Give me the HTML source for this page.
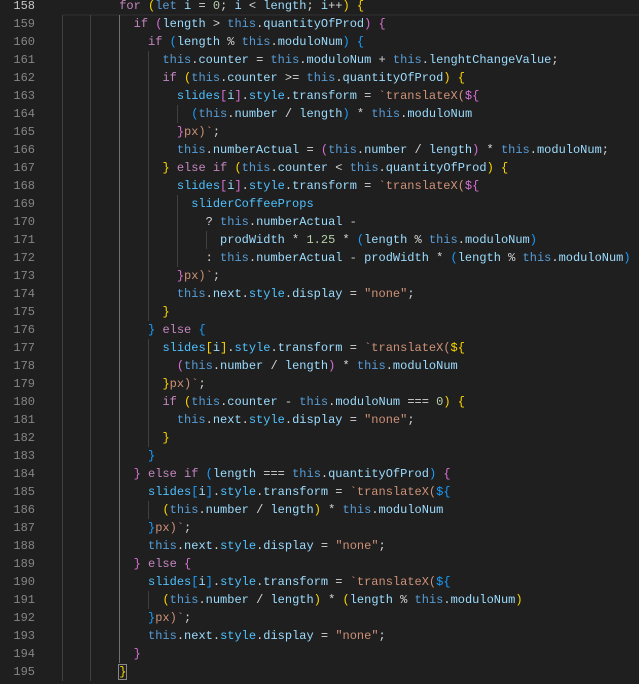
<!DOCTYPE html>
<html><head><meta charset="utf-8"><style>
html,body{margin:0;padding:0;background:#1f1f1f;width:639px;height:684px;overflow:hidden;position:relative;font-family:"Liberation Mono",monospace;font-size:12px;}
.l{position:absolute;left:4px;height:18px;line-height:18px;white-space:pre;color:#d4d4d4;}
.ln{position:absolute;left:0;width:35px;text-align:right;height:18px;line-height:18px;color:#858585;font-family:"Liberation Mono",monospace;font-size:12px;}
.g{position:absolute;width:1px;background:#404040;}
.cur{position:absolute;left:62px;right:0;top:-3px;height:17px;border-bottom:2px solid #282828;}
.k{color:#c586c0}.t{color:#569cd6}.v{color:#9cdcfe}.c{color:#4fc1ff}.s{color:#ce9178}.n{color:#b5cea8}.y{color:#ffd700}.p{color:#da70d6}.b{color:#179fff}
.box{outline:1px solid #888;}
</style></head><body>
<div class="cur"></div>
<div class="g" style="left:62px;top:15px;height:666px"></div>
<div class="g" style="left:90px;top:15px;height:666px"></div>
<div class="g" style="left:119px;top:15px;height:648px;background:#707070"></div>
<div class="g" style="left:148px;top:51px;height:270px"></div>
<div class="g" style="left:148px;top:339px;height:108px"></div>
<div class="g" style="left:148px;top:501px;height:18px"></div>
<div class="g" style="left:148px;top:591px;height:18px"></div>
<div class="g" style="left:177px;top:105px;height:18px"></div>
<div class="g" style="left:177px;top:195px;height:72px"></div>
<div class="g" style="left:206px;top:231px;height:18px"></div>

<div class="ln" style="top:-3px;color:#c6c6c6">158</div>
<div class="ln" style="top:15px">159</div><div class="ln" style="top:33px">160</div><div class="ln" style="top:51px">161</div><div class="ln" style="top:69px">162</div><div class="ln" style="top:87px">163</div><div class="ln" style="top:105px">164</div><div class="ln" style="top:123px">165</div><div class="ln" style="top:141px">166</div><div class="ln" style="top:159px">167</div><div class="ln" style="top:177px">168</div><div class="ln" style="top:195px">169</div><div class="ln" style="top:213px">170</div><div class="ln" style="top:231px">171</div><div class="ln" style="top:249px">172</div><div class="ln" style="top:267px">173</div><div class="ln" style="top:285px">174</div><div class="ln" style="top:303px">175</div><div class="ln" style="top:321px">176</div><div class="ln" style="top:339px">177</div><div class="ln" style="top:357px">178</div><div class="ln" style="top:375px">179</div><div class="ln" style="top:393px">180</div><div class="ln" style="top:411px">181</div><div class="ln" style="top:429px">182</div><div class="ln" style="top:447px">183</div><div class="ln" style="top:465px">184</div><div class="ln" style="top:483px">185</div><div class="ln" style="top:501px">186</div><div class="ln" style="top:519px">187</div><div class="ln" style="top:537px">188</div><div class="ln" style="top:555px">189</div><div class="ln" style="top:573px">190</div><div class="ln" style="top:591px">191</div><div class="ln" style="top:609px">192</div><div class="ln" style="top:627px">193</div><div class="ln" style="top:645px">194</div><div class="ln" style="top:663px">195</div>

<div class="l" style="top:-3px">                <span class="k">for</span> <span class="y">(</span><span class="t">let</span> <span class="v">i</span> = <span class="n">0</span>; <span class="v">i</span> &lt; <span class="v">length</span>; <span class="v">i</span>++<span class="y">)</span> <span class="y">{</span></div>
<div class="l" style="top:15px">                  <span class="k">if</span> <span class="p">(</span><span class="v">length</span> &gt; <span class="t">this</span>.<span class="v">quantityOfProd</span><span class="p">)</span> <span class="p">{</span></div>
<div class="l" style="top:33px">                    <span class="k">if</span> <span class="b">(</span><span class="v">length</span> % <span class="t">this</span>.<span class="v">moduloNum</span><span class="b">)</span> <span class="b">{</span></div>
<div class="l" style="top:51px">                      <span class="t">this</span>.<span class="v">counter</span> = <span class="t">this</span>.<span class="v">moduloNum</span> + <span class="t">this</span>.<span class="v">lenghtChangeValue</span>;</div>
<div class="l" style="top:69px">                      <span class="k">if</span> <span class="y">(</span><span class="t">this</span>.<span class="v">counter</span> &gt;= <span class="t">this</span>.<span class="v">quantityOfProd</span><span class="y">)</span> <span class="y">{</span></div>
<div class="l" style="top:87px">                        <span class="c">slides</span><span class="p">[</span><span class="v">i</span><span class="p">]</span>.<span class="c">style</span>.<span class="v">transform</span> = <span class="s">`translateX(</span><span class="p">${</span></div>
<div class="l" style="top:105px">                          <span class="b">(</span><span class="t">this</span>.<span class="v">number</span> / <span class="v">length</span><span class="b">)</span> * <span class="t">this</span>.<span class="v">moduloNum</span></div>
<div class="l" style="top:123px">                        <span class="p">}</span><span class="s">px)`</span>;</div>
<div class="l" style="top:141px">                        <span class="t">this</span>.<span class="v">numberActual</span> = <span class="p">(</span><span class="t">this</span>.<span class="v">number</span> / <span class="v">length</span><span class="p">)</span> * <span class="t">this</span>.<span class="v">moduloNum</span>;</div>
<div class="l" style="top:159px">                      <span class="y">}</span> <span class="k">else if</span> <span class="y">(</span><span class="t">this</span>.<span class="v">counter</span> &lt; <span class="t">this</span>.<span class="v">quantityOfProd</span><span class="y">)</span> <span class="y">{</span></div>
<div class="l" style="top:177px">                        <span class="c">slides</span><span class="p">[</span><span class="v">i</span><span class="p">]</span>.<span class="c">style</span>.<span class="v">transform</span> = <span class="s">`translateX(</span><span class="p">${</span></div>
<div class="l" style="top:195px">                          <span class="c">sliderCoffeeProps</span></div>
<div class="l" style="top:213px">                            ? <span class="t">this</span>.<span class="v">numberActual</span> -</div>
<div class="l" style="top:231px">                              <span class="v">prodWidth</span> * <span class="n">1.25</span> * <span class="b">(</span><span class="v">length</span> % <span class="t">this</span>.<span class="v">moduloNum</span><span class="b">)</span></div>
<div class="l" style="top:249px">                            : <span class="t">this</span>.<span class="v">numberActual</span> - <span class="v">prodWidth</span> * <span class="b">(</span><span class="v">length</span> % <span class="t">this</span>.<span class="v">moduloNum</span><span class="b">)</span></div>
<div class="l" style="top:267px">                        <span class="p">}</span><span class="s">px)`</span>;</div>
<div class="l" style="top:285px">                        <span class="t">this</span>.<span class="v">next</span>.<span class="c">style</span>.<span class="v">display</span> = <span class="s">"none"</span>;</div>
<div class="l" style="top:303px">                      <span class="y">}</span></div>
<div class="l" style="top:321px">                    <span class="b">}</span> <span class="k">else</span> <span class="b">{</span></div>
<div class="l" style="top:339px">                      <span class="c">slides</span><span class="y">[</span><span class="v">i</span><span class="y">]</span>.<span class="c">style</span>.<span class="v">transform</span> = <span class="s">`translateX(</span><span class="y">${</span></div>
<div class="l" style="top:357px">                        <span class="p">(</span><span class="t">this</span>.<span class="v">number</span> / <span class="v">length</span><span class="p">)</span> * <span class="t">this</span>.<span class="v">moduloNum</span></div>
<div class="l" style="top:375px">                      <span class="y">}</span><span class="s">px)`</span>;</div>
<div class="l" style="top:393px">                      <span class="k">if</span> <span class="y">(</span><span class="t">this</span>.<span class="v">counter</span> - <span class="t">this</span>.<span class="v">moduloNum</span> === <span class="n">0</span><span class="y">)</span> <span class="y">{</span></div>
<div class="l" style="top:411px">                        <span class="t">this</span>.<span class="v">next</span>.<span class="c">style</span>.<span class="v">display</span> = <span class="s">"none"</span>;</div>
<div class="l" style="top:429px">                      <span class="y">}</span></div>
<div class="l" style="top:447px">                    <span class="b">}</span></div>
<div class="l" style="top:465px">                  <span class="p">}</span> <span class="k">else if</span> <span class="b">(</span><span class="v">length</span> === <span class="t">this</span>.<span class="v">quantityOfProd</span><span class="b">)</span> <span class="p">{</span></div>
<div class="l" style="top:483px">                    <span class="c">slides</span><span class="b">[</span><span class="v">i</span><span class="b">]</span>.<span class="c">style</span>.<span class="v">transform</span> = <span class="s">`translateX(</span><span class="b">${</span></div>
<div class="l" style="top:501px">                      <span class="y">(</span><span class="t">this</span>.<span class="v">number</span> / <span class="v">length</span><span class="y">)</span> * <span class="t">this</span>.<span class="v">moduloNum</span></div>
<div class="l" style="top:519px">                    <span class="b">}</span><span class="s">px)`</span>;</div>
<div class="l" style="top:537px">                    <span class="t">this</span>.<span class="v">next</span>.<span class="c">style</span>.<span class="v">display</span> = <span class="s">"none"</span>;</div>
<div class="l" style="top:555px">                  <span class="p">}</span> <span class="k">else</span> <span class="p">{</span></div>
<div class="l" style="top:573px">                    <span class="c">slides</span><span class="b">[</span><span class="v">i</span><span class="b">]</span>.<span class="c">style</span>.<span class="v">transform</span> = <span class="s">`translateX(</span><span class="b">${</span></div>
<div class="l" style="top:591px">                      <span class="y">(</span><span class="t">this</span>.<span class="v">number</span> / <span class="v">length</span><span class="y">)</span> * <span class="y">(</span><span class="v">length</span> % <span class="t">this</span>.<span class="v">moduloNum</span><span class="y">)</span></div>
<div class="l" style="top:609px">                    <span class="b">}</span><span class="s">px)`</span>;</div>
<div class="l" style="top:627px">                    <span class="t">this</span>.<span class="v">next</span>.<span class="c">style</span>.<span class="v">display</span> = <span class="s">"none"</span>;</div>
<div class="l" style="top:645px">                  <span class="p">}</span></div>
<div class="l" style="top:663px">                <span class="y box">}</span></div>
</body></html>
